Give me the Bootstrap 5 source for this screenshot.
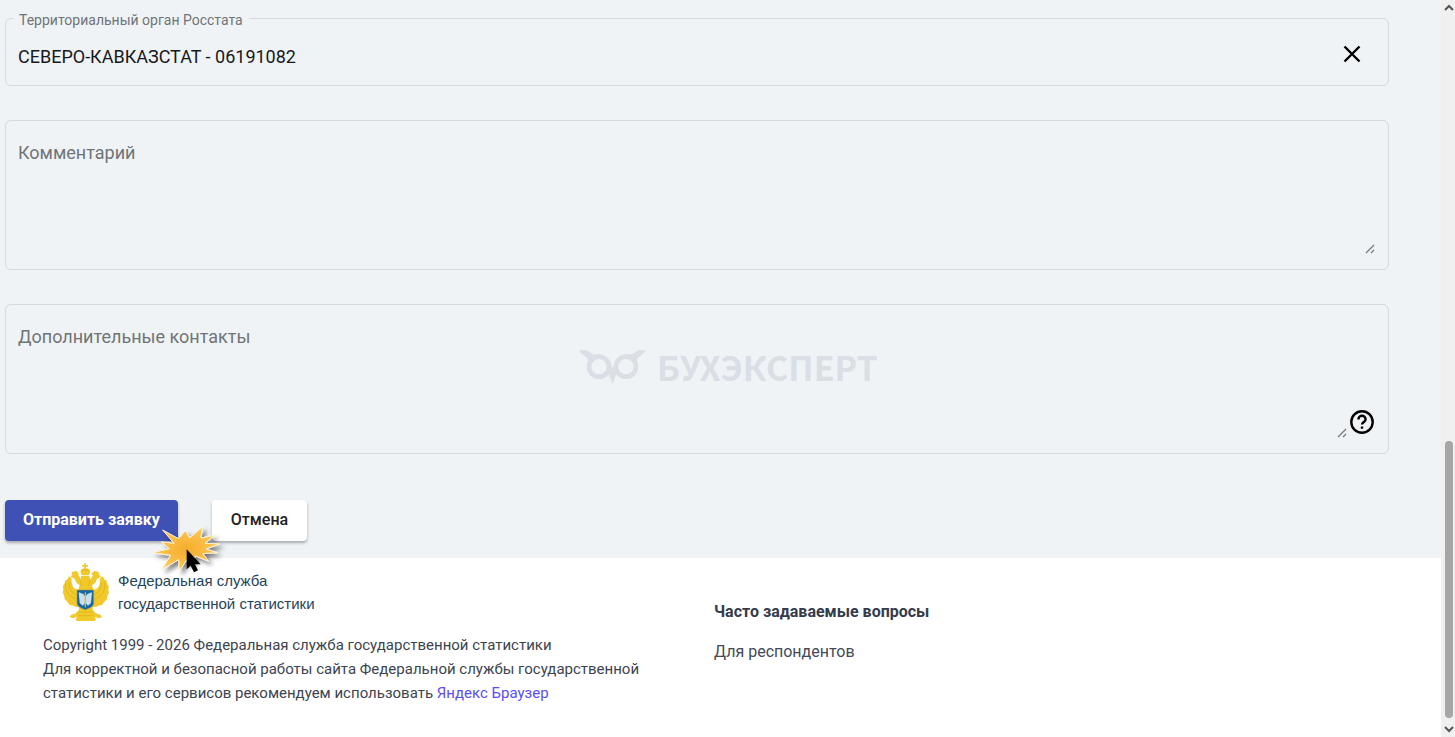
<!DOCTYPE html>
<html lang="ru">
<head>
<meta charset="utf-8">
<meta name="viewport" content="width=device-width, initial-scale=1">
<title>Заявка в Росстат</title>
<link href="https://cdn.jsdelivr.net/npm/bootstrap@5.3.0/dist/css/bootstrap.min.css" rel="stylesheet">
<style>
body { font-family: Roboto, "Liberation Sans", sans-serif; background: #fff; color: #3d4450; }
.form-area { background: #eff3f6; padding: 18px 52px 17px 5px; }
.field { border: 1px solid #d7dadd; border-radius: 6px; padding-left: 12px; }
.field-line { height: 68px; margin-bottom: 34px; padding-right: 24px; }
.field-area { height: 150px; margin-bottom: 34px; padding-top: 18px; }
.field-area + .form-actions { margin-top: 46px; }
.field input, .field textarea { background: transparent; border: 0; outline: 0; padding: 0; color: #17191c; font-size: 18px; }
.field input { padding-top: 8px; }
.field textarea { resize: none; }
.field label { color: #717477; font-size: 18px; line-height: 28px; }
.field .notch-label { top: -9px; left: 7px; padding: 0 6px; background: #eff3f6; font-size: 14px; line-height: 20px; }
.icon-btn { border: 0; background: none; padding: 0; color: #000; line-height: 0; }
.clear { padding-top: 4px; }
.grip { right: 13px; bottom: 15px; }
.grip-inset { right: 41px; }
.help { right: 14px; bottom: 19px; }
.watermark { top: 40px; left: 573px; color: #dadee5; font: 700 34px/44px "Noto Sans CJK SC", "Noto Sans", sans-serif; gap: 11px; pointer-events: none; }
.form-actions { gap: 34px; }
.act { height: 41px; border: 0; border-radius: 4px; padding: 0 18px 2px; font-size: 16px; font-weight: 500; box-shadow: 0 2px 3px rgba(0,0,0,.3); }
.act-send { background: #3f51b5; color: #fff; font-weight: 700; }
.act-cancel { background: #fff; color: #222; padding: 0 19px 2px; }
.burst { left: 145px; top: 20px; pointer-events: none; z-index: 2; }
.site-footer { padding: 5px 56px 24px 43px; font-size: 15px; line-height: 24px; }
.brand-link { color: #24435c; font: 15px/23px "Liberation Sans", sans-serif; gap: 8px; padding-left: 17px; text-decoration: none; }
.legal { margin-top: 12px; }
.legal a { color: #5a4df5; text-decoration: none; }
.faq { font-size: 16px; padding-top: 37px; }
.faq h2 { font-size: 16px; line-height: 24px; font-weight: 700; margin-bottom: 16px; color: #343b4c; }
.faq a { color: #434a5a; text-decoration: none; }
.scroll-track { width: 14px; background: #f0f0f0; padding: 4px 1px 4px 3px; }
.scroll-thumb { width: 8px; background: #a6a6a6; border-radius: 4px; flex: 0 0 38%; margin: auto 0 8px; }
</style>
</head>
<body>
<div class="d-flex min-vh-100">
  <div class="flex-grow-1 d-flex flex-column">
    <main class="form-area">
      <form>
        <div class="field field-line position-relative d-flex align-items-center">
          <label class="notch-label position-absolute" for="organ">Территориальный орган Росстата</label>
          <input class="flex-grow-1" id="organ" type="text" value="СЕВЕРО-КАВКАЗСТАТ - 06191082">
          <button class="icon-btn clear" type="button" aria-label="Очистить">
            <svg width="24" height="24" viewBox="0 0 24 24" fill="none" stroke="currentColor" stroke-width="2.4"><path d="M4.5 4.5l15 15M19.5 4.5l-15 15"/></svg>
          </button>
        </div>
        <div class="field field-area position-relative d-flex flex-column">
          <label for="comment">Комментарий</label>
          <textarea class="flex-grow-1" id="comment"></textarea>
          <svg class="grip position-absolute" width="10" height="10" viewBox="0 0 10 10" stroke="#777" stroke-width="1.2"><path d="M1 9l8-8M6 9l3-3"/></svg>
        </div>
        <div class="field field-area position-relative d-flex flex-column">
          <label for="contacts">Дополнительные контакты</label>
          <textarea class="flex-grow-1" id="contacts"></textarea>
          <svg class="grip grip-inset position-absolute" width="10" height="10" viewBox="0 0 10 10" stroke="#777" stroke-width="1.2"><path d="M1 9l8-8M6 9l3-3"/></svg>
          <button class="icon-btn help position-absolute" type="button" aria-label="Справка">
            <svg width="24" height="24" viewBox="0 0 24 24" fill="none" stroke="currentColor" stroke-width="2.4"><circle cx="12" cy="12" r="10.7"/><path d="M8.4 9.4a3.6 3.6 0 0 1 7.2 0c0 2.5-3.6 2.7-3.6 5.2M12 16.4v2.3"/></svg>
          </button>
          <div class="watermark position-absolute d-flex align-items-center">
            <svg width="67" height="34" viewBox="0 0 201 102" aria-hidden="true">
              <g fill="none" stroke="#dadee5" stroke-width="14"><circle cx="60" cy="50" r="30"/><circle cx="141" cy="50" r="30"/></g>
              <path fill="#dadee5" d="M0 1h22c8 3 14 12 28 13l12-1v12c-16 0-26 8-32 14C29 20 8 16 0 1zM201 1h-22c-8 3-14 12-28 13l-12-1v12c16 0 26 8 32 14 1-19 22-23 30-38zM88 34l12.500 20L113 34l3 30-8 18-7.500 20L93 82l-8-18z"/>
            </svg>
            <span>БУХЭКСПЕРТ</span>
          </div>
        </div>
        <div class="form-actions position-relative d-flex">
          <button class="act act-send" type="submit">Отправить заявку</button>
          <button class="act act-cancel" type="button">Отмена</button>
          <svg class="burst position-absolute" width="80" height="60" viewBox="0 0 240 180" aria-hidden="true">
            <defs>
              <radialGradient id="glow"><stop offset="0" stop-color="#f4ad2c"/><stop offset="1" stop-color="#ffc755"/></radialGradient>
              <filter id="soft" x="-20%" y="-20%" width="150%" height="150%"><feDropShadow dx="10" dy="10" stdDeviation="6" flood-color="#000" flood-opacity=".5"/></filter>
            </defs>
            <path filter="url(#soft)" fill="url(#glow)" stroke="#fff3d8" stroke-width="3" d="M38 30L86 56 106 32 119 54 158 20 153 54 194 46 165 70 209 72 168 87 202 98 158 101 176 124 137 108 124 132 108 122 88 154 86 119 36 148 62 106 8 98 58 86 34 66 72 70z"/>
            <path d="M110 88v60l12-11 10 20 12-6-9-18h17z"/>
          </svg>
        </div>
      </form>
    </main>
    <footer class="site-footer">
      <div class="row g-0">
        <div class="col-6">
          <a class="brand-link d-flex align-items-center" href="#">
            <svg width="50" height="58" viewBox="0 0 150 174" aria-hidden="true">
              <g fill="#f2c92a">
                <path d="M73 0h5v6h6v5h-6v5c12 1 16 9 9 20H65c-7-11-3-19 8-20v-5h-6V6h6z"/>
                <path d="M63 38h25l4 14c3-14 12-22 24-20l7 9-12 6-5 12-10 8 4 13c14-1 22-13 20-34l8-6 6 10 5 2 3 12 4 4-1 14 2 6-5 12-1 9-9 8-5 8-13 3-6 4-10-1v10l10 10 14 5 4 6-8 4-14-4 4 8-5 6 4 8-12 2-8 5H68l-8-5-12-2 4-8-5-6 4-8-14 4-8-4 4-6 14-5 10-10v-10l-10 1-6-4-13-3-5-8-9-8-1-9-5-12 2-6-1-14 4-4 3-12 5-2 6-10 8 6c-2 21 6 33 20 34l4-13-10-8-5-12-12-6 7-9c12-2 21 6 24 20z"/>
                <path d="M35 27l14-3 8 8-5 7-17-5zM103 24l13 3v7l-16 5-6-7z"/>
              </g>
              <path fill="none" stroke="#d9ac12" stroke-width="2" d="M17 58c-3 22 5 41 30 49M27 58c0 20 8 33 22 36M134 58c3 22-5 41-30 49M124 58c0 20-8 33-22 36M66 22h19M60 49l5 20M91 49l-5 20M54 147h43M54 158h47"/>
              <path fill="#1765a8" stroke="#a79a35" stroke-width="2" d="M51 81h50v39c0 12-14 16-25 20-11-4-25-8-25-20z"/>
              <path fill="#c9dfee" d="M56 88l14 5 6 9 6-9 14-5-3 32-9 8-8-9-8 9-9-8z"/>
              <path fill="#e1bc27" d="M74 88h4v45h-4z"/>
            </svg>
            <span>Федеральная служба<br>государственной статистики</span>
          </a>
          <div class="legal">
            Copyright 1999 - 2026 Федеральная служба государственной статистики<br>
            Для корректной и безопасной работы сайта Федеральной службы государственной<br>
            статистики и его сервисов рекомендуем использовать <a href="#">Яндекс Браузер</a>
          </div>
        </div>
        <div class="col-6 faq">
          <h2>Часто задаваемые вопросы</h2>
          <a href="#">Для респондентов</a>
        </div>
      </div>
    </footer>
  </div>
  <div class="scroll-track d-flex flex-column align-items-center" aria-hidden="true">
    <svg width="10" height="7" viewBox="0 0 10 7" fill="none" stroke="#555" stroke-width="2"><path d="M1 6l4-4 4 4"/></svg>
    <div class="scroll-thumb"></div>
    <svg width="10" height="7" viewBox="0 0 10 7" fill="none" stroke="#555" stroke-width="2"><path d="M1 1l4 4 4-4"/></svg>
  </div>
</div>
<script src="https://cdn.jsdelivr.net/npm/bootstrap@5.3.0/dist/js/bootstrap.bundle.min.js"></script>
</body>
</html>
